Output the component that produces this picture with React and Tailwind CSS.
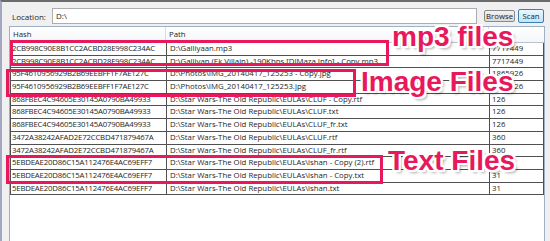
import React from "react";

const rows = [
  ["2CB998C90E8B1CC2ACBD28E998C234AC", "D:\\Galliyaan.mp3", "7717449"],
  ["2CB998C90E8B1CC2ACBD28E998C234AC", "D:\\Galliyan (Ek Villain) -190Kbps [DJMaza.Info] - Copy.mp3", "7717449"],
  ["95F4610956929B2B69EEBFF1F7AE127C", "D:\\Photos\\IMG_20140417_125253 - Copy.jpg", "1865926"],
  ["95F4610956929B2B69EEBFF1F7AE127C", "D:\\Photos\\IMG_20140417_125253.jpg", "1865926"],
  ["868FBEC4C94605E30145A0790BA49933", "D:\\Star Wars-The Old Republic\\EULAs\\CLUF - Copy.rtf", "126"],
  ["868FBEC4C94605E30145A0790BA49933", "D:\\Star Wars-The Old Republic\\EULAs\\CLUF.txt", "126"],
  ["868FBEC4C94605E30145A0790BA49933", "D:\\Star Wars-The Old Republic\\EULAs\\CLUF_fr.txt", "126"],
  ["3472A38242AFAD2E72CCBD471879467A", "D:\\Star Wars-The Old Republic\\EULAs\\CLUF.rtf", "360"],
  ["3472A38242AFAD2E72CCBD471879467A", "D:\\Star Wars-The Old Republic\\EULAs\\CLUF_fr.rtf", "360"],
  ["5EBDEAE20D86C15A112476E4AC69EFF7", "D:\\Star Wars-The Old Republic\\EULAs\\ishan - Copy (2).rtf", "31"],
  ["5EBDEAE20D86C15A112476E4AC69EFF7", "D:\\Star Wars-The Old Republic\\EULAs\\ishan - Copy.txt", "31"],
  ["5EBDEAE20D86C15A112476E4AC69EFF7", "D:\\Star Wars-The Old Republic\\EULAs\\ishan.txt", "31"],
];

const label =
  "absolute font-['Liberation_Sans',Arial,sans-serif] font-bold text-[28px] leading-[28px] text-[#e8185c] whitespace-nowrap [text-shadow:2px_0_0_#fff,-2px_0_0_#fff,0_2px_0_#fff,0_-2px_0_#fff,2px_2px_0_#fff,-2px_-2px_0_#fff,2px_-2px_0_#fff,-2px_2px_0_#fff,3px_3px_3px_rgba(0,0,0,0.35)]";

export default function App() {
  return (
    <div className="relative w-[550px] h-[241px] overflow-hidden bg-[#f0f0f0] border-t-2 border-l-2 border-t-[#6b6b6b] border-l-[#a3a7c0] font-['Open_Sans',sans-serif] text-[7.8px] text-[#1e1e1e]">
      {/* toolbar */}
      <div className="flex items-start h-[24px] pt-[6px]">
        <span className="ml-[10px] mt-[3px] w-[40px] text-[8px]">Location:</span>
        <div className="w-[425px] h-[16px] bg-white border border-[#abadb3] pl-[3px] leading-[13px] text-[8px]">D:\</div>
        <button className="ml-[7px] mt-[2px] w-[31px] h-[12px] border border-[#8a8a8a] rounded-[2px] bg-gradient-to-b from-[#f2f2f2] to-[#d9d9d9] text-[7.8px] leading-[10px]">
          Browse
        </button>
        <button className="ml-[3px] mt-[1px] w-[26px] h-[14px] border border-[#3c7fb1] rounded-[2px] bg-gradient-to-b from-[#eaf6fd] to-[#bee6fd] text-[7.8px] leading-[12px]">
          Scan
        </button>
      </div>

      {/* grid */}
      <div className="ml-[7px] w-[536px] h-[220px] bg-white border-t border-l border-r border-[#9fb0c4]">
        <div className="flex h-[16px] border-b border-[#b9c3ce] bg-gradient-to-b from-white to-[#f4f6f8]">
          <div className="w-[156px] pl-[3px] border-r border-[#d5dbe2] leading-[15px]">Hash</div>
          <div className="w-[323px] pl-[3px] border-r border-[#d5dbe2] leading-[15px]">Path</div>
          <div className="flex-1" />
        </div>
        <div className="w-[534px] border-l border-[#505050]">
          {rows.map((r, i) => (
            <div key={i} className="flex h-[12.7px] border-b border-[#505050] leading-[11.7px] whitespace-nowrap">
              <div className="w-[156px] pl-[1px] border-r border-[#505050] overflow-hidden tracking-[-0.2px]">{r[0]}</div>
              <div className="w-[323px] pl-[3px] border-r border-[#505050] overflow-hidden">{r[1]}</div>
              <div className="w-[54px] pl-[2px] border-r border-[#505050] overflow-hidden">{r[2]}</div>
            </div>
          ))}
        </div>
      </div>

      {/* annotations */}
      <div className="absolute left-[8px] top-[38px] w-[379px] h-[26px] border-[3px] border-[#e8185c]" />
      <div className="absolute left-[4px] top-[67px] w-[350px] h-[28px] border-[3px] border-[#e8185c]" />
      <div className="absolute left-[4px] top-[153px] w-[377px] h-[29px] border-[3px] border-[#e8185c]" />
      <div className={label + " left-[390px] top-[21px]"}>mp3 files</div>
      <div className={label + " left-[359px] top-[66px]"}>Image Files</div>
      <div className={label + " left-[386px] top-[145px]"}>Text Files</div>
    </div>
  );
}
